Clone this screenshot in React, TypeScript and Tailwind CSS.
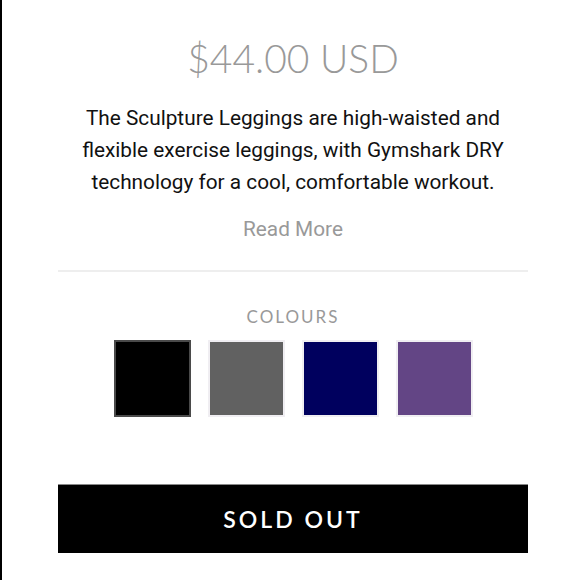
const swatches = [
  { name: 'Black', color: 'bg-[#000000]', selected: true },
  { name: 'Charcoal', color: 'bg-[#616161]', selected: false },
  { name: 'Navy', color: 'bg-[#00005e]', selected: false },
  { name: 'Purple', color: 'bg-[#634585]', selected: false },
];

export default function App() {
  return (
    <div className="h-[580px] w-[580px] overflow-hidden border-l-2 border-black bg-white">
      <div className="ml-[56px] flex w-[470px] flex-col items-center">
        <p
          className="mt-[34px] text-[39px] font-light leading-[48px] text-[#999999]"
          style={{ fontFamily: 'Lato, sans-serif' }}
        >
          $44.00 USD
        </p>

        <p
          className="mt-[20px] w-[440px] text-center text-[20.8px] leading-[32px] text-[#111111]"
          style={{ fontFamily: 'Roboto, sans-serif' }}
        >
          The Sculpture Leggings are high-waisted and flexible exercise leggings, with Gymshark DRY
          technology for a cool, comfortable workout.
        </p>

        <a
          className="mt-[15px] text-[20.8px] leading-[32px] text-[#999999]"
          style={{ fontFamily: 'Roboto, sans-serif' }}
        >
          Read More
        </a>

        <div className="mt-[25px] h-[2px] w-full bg-[#eeeeee]" />

        <p
          className="mt-[35px] text-[17px] leading-[20px] tracking-[2px] text-[#999999]"
          style={{ fontFamily: 'Lato, sans-serif' }}
        >
          COLOURS
        </p>

        <div className="mt-[13px] flex gap-[17px]">
          {swatches.map((s) => (
            <button
              key={s.name}
              title={s.name}
              className={`h-[77px] w-[77px] border-2 ${s.color} ${
                s.selected ? 'border-[#4a4a4a]' : 'border-[#f0eef2]'
              }`}
            />
          ))}
        </div>

        <button
          className="mt-[67px] h-[69px] w-full border-t border-[#888888] bg-black text-[23px] font-semibold tracking-[3px] text-white"
          style={{ fontFamily: 'Lato, sans-serif' }}
        >
          SOLD OUT
        </button>
      </div>
    </div>
  );
}
